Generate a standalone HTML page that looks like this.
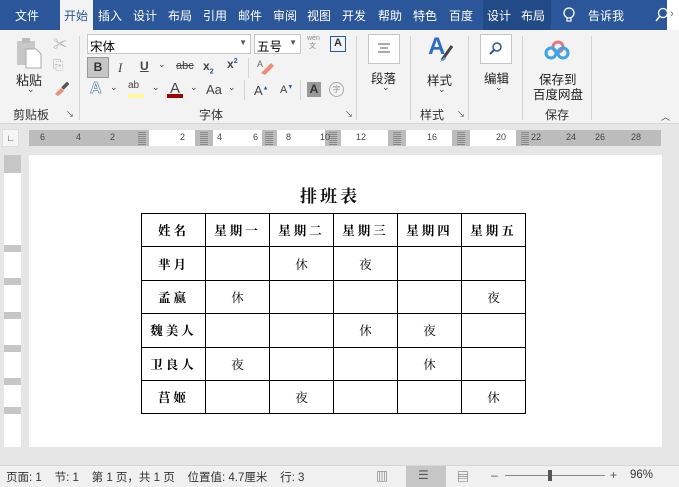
<!DOCTYPE html>
<html><head><meta charset="utf-8"><style>
*{margin:0;padding:0;box-sizing:border-box}
body{width:679px;height:487px;overflow:hidden;background:#e6e6e6;font-family:"Liberation Sans","Noto Sans CJK SC",sans-serif;position:relative;font-size:12px;color:#333}
.a{position:absolute;white-space:nowrap}
.tb{position:absolute;left:0;top:0;width:679px;height:30px;background:#2b579a}
.tab{position:absolute;top:7px;color:#fff;font-size:12px}
.rib{position:absolute;left:0;top:30px;width:679px;height:94px;background:#f3f3f3;border-bottom:1px solid #d5d5d5}
.sep{position:absolute;top:36px;width:1px;height:84px;background:#d5d5d5}
.lbl{position:absolute;top:106px;font-size:12px;color:#333}
.gi{position:absolute;font-size:12px;color:#444}
.rw{position:absolute;top:130px;height:16px;background:#fff}
.rn{position:absolute;top:132px;font-size:9px;color:#444}
.rg{position:absolute;top:131px;width:8px;height:14px;background:repeating-linear-gradient(0deg,#888 0 1px,#bcbcbc 1px 2px)}
table{position:absolute;left:141px;top:213px;border-collapse:collapse;font-family:"Liberation Serif","Noto Serif CJK SC",serif}
td{border:1px solid #000;width:64px;height:33.4px;text-align:center;font-size:12.5px;color:#000;padding:0}
tr:first-child td,td:first-child{font-weight:bold;letter-spacing:3px}
</style></head><body>
<div class="tb"></div>
<div class="a" style="left:60px;top:0;width:33px;height:30px;background:#f3f3f3"></div>
<div class="a" style="left:483px;top:0;width:68px;height:30px;background:#214a86"></div>
<div class="tab" style="left:15px">文件</div>
<div class="tab" style="left:64px;color:#2b579a">开始</div>
<div class="tab" style="left:98px">插入</div>
<div class="tab" style="left:133px">设计</div>
<div class="tab" style="left:168px">布局</div>
<div class="tab" style="left:203px">引用</div>
<div class="tab" style="left:238px">邮件</div>
<div class="tab" style="left:273px">审阅</div>
<div class="tab" style="left:307px">视图</div>
<div class="tab" style="left:342px">开发</div>
<div class="tab" style="left:378px">帮助</div>
<div class="tab" style="left:413px">特色</div>
<div class="tab" style="left:449px">百度</div>
<div class="tab" style="left:487px">设计</div>
<div class="tab" style="left:521px">布局</div>
<svg class="a" style="left:562px;top:6px" width="14" height="18"><circle cx="7" cy="7" r="5" fill="none" stroke="#fff" stroke-width="1.3"/><path d="M5 12v3h4v-3" fill="none" stroke="#fff" stroke-width="1.2"/></svg>
<div class="tab" style="left:588px">告诉我</div>
<svg class="a" style="left:655px;top:7px" width="14" height="16"><circle cx="8" cy="6" r="4.5" fill="none" stroke="#fff" stroke-width="1.3"/><path d="M5 9l-4 5" stroke="#fff" stroke-width="1.5"/></svg>
<div class="a" style="left:667px;top:0;width:12px;height:30px;background:#fff;color:#666;font-size:11px;padding:8px 3px">›</div>

<div class="rib"></div>
<svg class="a" style="left:15px;top:37px" width="30" height="32"><rect x="2" y="4" width="18" height="24" fill="#c8c8c8"/><rect x="7" y="1" width="8" height="5" fill="#bbb"/><path d="M11 12h10l5 5v14H11z" fill="#fff" stroke="#aaa"/></svg>
<div class="gi" style="left:16px;top:70px;font-size:13px;color:#222">粘贴</div>
<div class="gi" style="left:27px;top:84px;font-size:9px">⌄</div>
<div class="gi" style="left:53px;top:34px;color:#aaa;font-size:14px">✂</div>
<div class="gi" style="left:53px;top:57px;color:#aaa;font-size:13px">⎘</div>
<svg class="a" style="left:53px;top:82px" width="16" height="14"><path d="M2 12l6-6 3 3-6 5z" fill="#e9907a"/><path d="M9 6l5-5 1 1-5 5" stroke="#555" stroke-width="2"/></svg>
<div class="lbl" style="left:13px">剪贴板</div>
<div class="gi" style="left:66px;top:109px;font-size:8px">↘</div>
<div class="sep" style="left:79px"></div>
<div class="a" style="left:87px;top:34px;width:164px;height:20px;background:#fff;border:1px solid #c6c6c6;font-size:12.5px;padding:1px 2px;color:#000">宋体<span style="position:absolute;right:3px;top:3px;font-size:8px;color:#555">▼</span></div>
<div class="a" style="left:254px;top:34px;width:47px;height:20px;background:#fff;border:1px solid #c6c6c6;font-size:12.5px;padding:1px 2px;color:#000">五号<span style="position:absolute;right:3px;top:3px;font-size:8px;color:#555">▼</span></div>
<div class="gi" style="left:307px;top:35px;font-size:7px;color:#888;line-height:8px">wén<br>&nbsp;文</div>
<div class="a" style="left:330px;top:36px;width:16px;height:16px;border:1.5px solid #2b579a;font-size:11px;font-weight:bold;text-align:center;line-height:13px;color:#333">A</div>
<div class="a" style="left:87px;top:57px;width:22px;height:21px;background:#c6c6c6;border:1px solid #999;font-weight:bold;text-align:center;line-height:19px;color:#333">B</div>
<div class="gi" style="left:118px;top:60px;font-style:italic;font-family:'Liberation Serif',serif;font-size:13px">I</div>
<div class="gi" style="left:140px;top:59px;text-decoration:underline;font-weight:bold">U</div>
<div class="gi" style="left:158px;top:59px;font-size:9px">⌄</div>
<div class="gi" style="left:176px;top:60px;text-decoration:line-through;font-size:11px">abc</div>
<div class="gi" style="left:203px;top:59px;font-weight:bold">x<sub style="font-size:7px;color:#2b579a">2</sub></div>
<div class="gi" style="left:227px;top:57px;font-weight:bold">x<sup style="font-size:7px;color:#2b579a">2</sup></div>
<div class="a" style="left:248px;top:58px;width:1px;height:20px;background:#d5d5d5"></div>
<svg class="a" style="left:256px;top:58px" width="18" height="18"><path d="M5 15l10-10 3 3-9 9z" fill="#e9907a"/><text x="1" y="9" font-size="9" fill="#666">A</text></svg>
<div class="gi" style="left:90px;top:80px;font-size:16px;font-weight:bold;-webkit-text-stroke:0.5px #2b579a;color:#fff">A</div>
<div class="gi" style="left:110px;top:82px;font-size:9px">⌄</div>
<div class="gi" style="left:128px;top:80px;font-size:10px">ab</div>
<div class="a" style="left:128px;top:94px;width:16px;height:4px;background:#fff799"></div>
<div class="gi" style="left:152px;top:82px;font-size:9px">⌄</div>
<div class="gi" style="left:170px;top:80px;font-size:15px">A</div>
<div class="a" style="left:167px;top:94px;width:16px;height:4px;background:#a00000"></div>
<div class="gi" style="left:190px;top:82px;font-size:9px">⌄</div>
<div class="gi" style="left:206px;top:82px;font-size:13px">Aa</div>
<div class="gi" style="left:228px;top:82px;font-size:9px">⌄</div>
<div class="a" style="left:244px;top:80px;width:1px;height:20px;background:#d5d5d5"></div>
<div class="gi" style="left:254px;top:83px;font-size:13px">A<sup style="font-size:6px;color:#2b579a">▲</sup></div>
<div class="gi" style="left:280px;top:84px;font-size:11px">A<sup style="font-size:6px;color:#2b579a">▼</sup></div>
<div class="a" style="left:300px;top:80px;width:1px;height:20px;background:#d5d5d5"></div>
<div class="a" style="left:307px;top:82px;width:14px;height:15px;background:#999;color:#333;font-weight:bold;text-align:center;line-height:15px;font-size:12px">A</div>
<div class="a" style="left:329px;top:82px;width:15px;height:15px;border:1px solid #aaa;border-radius:50%;font-size:8px;color:#999;text-align:center;line-height:13px">字</div>
<div class="lbl" style="left:199px">字体</div>
<div class="gi" style="left:345px;top:109px;font-size:8px">↘</div>
<div class="sep" style="left:356px"></div>
<div class="a" style="left:368px;top:34px;width:32px;height:30px;background:#fff;border:1px solid #c6c6c6"></div>
<svg class="a" style="left:375px;top:42px" width="18" height="14"><path d="M3 2h12M5 6h8M3 10h12" stroke="#555"/></svg>
<div class="gi" style="left:371px;top:68px;font-size:12.5px;color:#222">段落</div>
<div class="gi" style="left:382px;top:82px;font-size:9px">⌄</div>
<div class="sep" style="left:410px"></div>
<div class="gi" style="left:428px;top:33px;font-size:24px;color:#2b6cc4;font-weight:bold">A</div>
<svg class="a" style="left:438px;top:40px" width="20" height="24"><path d="M4 20l10-14" stroke="#444" stroke-width="3"/><path d="M2 22l4-5 2 2z" fill="#4a9ee0"/></svg>
<div class="gi" style="left:427px;top:70px;font-size:12.5px;color:#222">样式</div>
<div class="gi" style="left:438px;top:84px;font-size:9px">⌄</div>
<div class="lbl" style="left:420px">样式</div>
<div class="gi" style="left:457px;top:109px;font-size:8px">↘</div>
<div class="sep" style="left:468px"></div>
<div class="a" style="left:480px;top:34px;width:32px;height:30px;background:#fff;border:1px solid #c6c6c6"></div>
<svg class="a" style="left:486px;top:40px" width="20" height="18"><circle cx="11" cy="7" r="4" fill="none" stroke="#2b579a" stroke-width="1.5"/><path d="M8 10l-4 4" stroke="#2b579a" stroke-width="2"/></svg>
<div class="gi" style="left:484px;top:68px;font-size:12.5px;color:#222">编辑</div>
<div class="gi" style="left:495px;top:82px;font-size:9px">⌄</div>
<div class="sep" style="left:522px"></div>
<svg class="a" style="left:542px;top:38px" width="30" height="24"><circle cx="16" cy="9" r="5" fill="none" stroke="#e07a7a" stroke-width="3"/><circle cx="9" cy="15" r="5" fill="none" stroke="#3ba4e8" stroke-width="3"/><circle cx="21" cy="15" r="5" fill="none" stroke="#3ba4e8" stroke-width="3"/></svg>
<div class="gi" style="left:539px;top:69px;font-size:12.5px;color:#222">保存到</div>
<div class="gi" style="left:533px;top:84px;font-size:12.5px;color:#222">百度网盘</div>
<div class="lbl" style="left:545px">保存</div>
<div class="sep" style="left:591px"></div>
<div class="gi" style="left:661px;top:110px;font-size:9px">︿</div>

<!-- horizontal ruler -->
<div class="a" style="left:2px;top:129px;width:17px;height:18px;background:#f5f5f5;border:1px solid #ddd;font-size:9px;text-align:center;line-height:16px">∟</div>
<div class="a" style="left:29px;top:130px;width:632px;height:16px;background:#bcbcbc"></div>
<div class="rw" style="left:149px;width:46px"></div>
<div class="rw" style="left:213px;width:49px"></div>
<div class="rw" style="left:277px;width:48px"></div>
<div class="rw" style="left:341px;width:47px"></div>
<div class="rw" style="left:406px;width:46px"></div>
<div class="rw" style="left:470px;width:46px"></div>
<div class="rg" style="left:138px"></div><div class="rg" style="left:200px"></div><div class="rg" style="left:265px"></div><div class="rg" style="left:329px"></div><div class="rg" style="left:393px"></div><div class="rg" style="left:457px"></div><div class="rg" style="left:521px"></div>
<div class="rn" style="left:40px">6</div><div class="rn" style="left:76px">4</div><div class="rn" style="left:110px">2</div>
<div class="rn" style="left:180px">2</div><div class="rn" style="left:217px">4</div><div class="rn" style="left:253px">6</div>
<div class="rn" style="left:286px">8</div><div class="rn" style="left:320px">10</div><div class="rn" style="left:356px">12</div>
<div class="rn" style="left:427px">16</div><div class="rn" style="left:496px">20</div><div class="rn" style="left:531px">22</div>
<div class="rn" style="left:566px">24</div><div class="rn" style="left:595px">26</div><div class="rn" style="left:631px">28</div>

<!-- vertical ruler -->
<div class="a" style="left:4px;top:155px;width:17px;height:292px;background:#fff"></div>
<div class="a" style="left:4px;top:155px;width:17px;height:18px;background:#c6c6c6"></div>
<div class="a" style="left:4px;top:245px;width:17px;height:7px;background:#c6c6c6"></div>
<div class="a" style="left:4px;top:278px;width:17px;height:7px;background:#c6c6c6"></div>
<div class="a" style="left:4px;top:312px;width:17px;height:7px;background:#c6c6c6"></div>
<div class="a" style="left:4px;top:345px;width:17px;height:7px;background:#c6c6c6"></div>
<div class="a" style="left:4px;top:378px;width:17px;height:7px;background:#c6c6c6"></div>
<div class="a" style="left:4px;top:407px;width:17px;height:7px;background:#c6c6c6"></div>

<div class="a" style="left:29px;top:155px;width:633px;height:292px;background:#fff"></div>
<div class="a" style="left:300px;top:182px;font-size:17px;font-weight:bold;letter-spacing:3px;color:#111;font-family:'Liberation Serif','Noto Serif CJK SC',serif">排班表</div>
<table>
<tr><td>姓名</td><td>星期一</td><td>星期二</td><td>星期三</td><td>星期四</td><td>星期五</td></tr>
<tr><td>芈月</td><td></td><td>休</td><td>夜</td><td></td><td></td></tr>
<tr><td>孟嬴</td><td>休</td><td></td><td></td><td></td><td>夜</td></tr>
<tr><td>魏美人</td><td></td><td></td><td>休</td><td>夜</td><td></td></tr>
<tr><td>卫良人</td><td>夜</td><td></td><td></td><td>休</td><td></td></tr>
<tr><td>莒姬</td><td></td><td>夜</td><td></td><td></td><td>休</td></tr>
</table>

<div class="a" style="left:0;top:465px;width:679px;height:22px;background:#f0f0f0;border-top:1px solid #d5d5d5"></div>
<div class="a" style="left:406px;top:466px;width:40px;height:21px;background:#c6c6c6"></div>
<div class="a" style="left:6px;top:469px;font-size:11.5px;color:#333">页面: 1 &nbsp;&nbsp; 节: 1 &nbsp;&nbsp; 第 1 页，共 1 页 &nbsp;&nbsp; 位置值: 4.7厘米 &nbsp;&nbsp; 行: 3</div>
<div class="a" style="left:376px;top:468px;font-size:12px;color:#555">▥</div>
<div class="a" style="left:418px;top:468px;font-size:12px;color:#555">☰</div>
<div class="a" style="left:457px;top:468px;font-size:12px;color:#555">▤</div>
<div class="a" style="left:491px;top:468px;font-size:12px;color:#555">–</div>
<div class="a" style="left:505px;top:475px;width:100px;height:1px;background:#888"></div>
<div class="a" style="left:548px;top:470px;width:4px;height:11px;background:#555"></div>
<div class="a" style="left:610px;top:468px;font-size:12px;color:#555">+</div>
<div class="a" style="left:630px;top:469px;font-size:11.5px;color:#333">96%</div>
</body></html>
